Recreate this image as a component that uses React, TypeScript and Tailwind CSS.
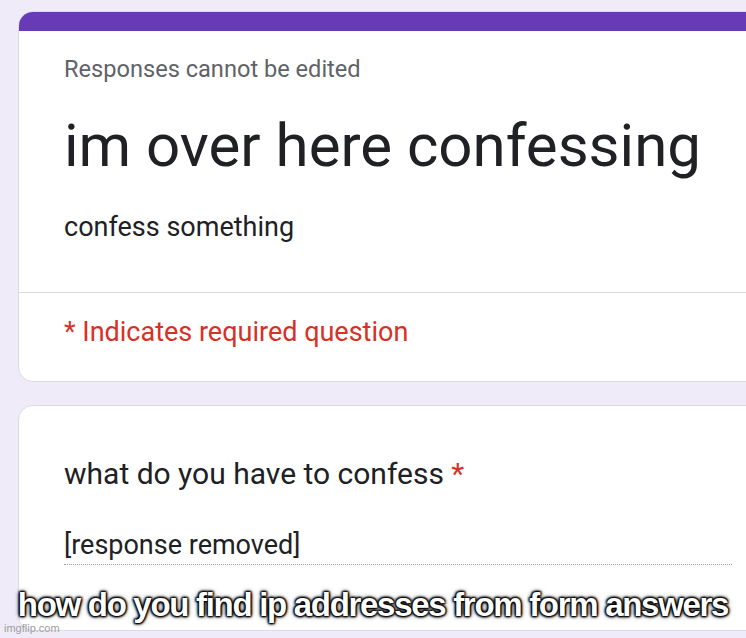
export default function App() {
  return (
    <div className="relative h-[638px] w-[746px] overflow-hidden bg-[#f0ebf8] font-['Roboto',sans-serif]">
      <div className="flex flex-col gap-[23px] pl-[18px] pt-[11px]">
        <div className="w-[760px] overflow-hidden rounded-[15px] border border-[#dadce0] bg-white">
          <div className="h-[19px] bg-[#673ab7]" />
          <div className="px-[45px] pt-[24px]">
            <div className="text-[23.6px] leading-[28px] text-[#5f6368]">Responses cannot be edited</div>
            <div className="mt-[27px] text-[60px] leading-[72px] text-[#202124]">im over here confessing</div>
            <div className="mt-[29px] text-[27px] leading-[32px] text-[#202124]">confess something</div>
          </div>
          <div className="mt-[49px] border-t border-[#dadce0]" />
          <div className="px-[45px] pt-[23px] pb-[33px] text-[27px] leading-[32px] text-[#d93025]">* Indicates required question</div>
        </div>
        <div className="h-[226px] w-[760px] rounded-[15px] border border-[#dadce0] bg-white px-[45px] pt-[50px]">
          <div className="text-[30px] leading-[36px] text-[#202124]">
            what do you have to confess <span className="text-[#d93025]">*</span>
          </div>
          <div className="mt-[37px] border-b border-dotted border-[#9aa0a6] pb-[3px] text-[27px] leading-[32px] text-[#202124]">
            [response removed]
          </div>
        </div>
      </div>
      <div className="absolute left-0 top-[585px] w-full text-center font-['Liberation_Sans',Arial,sans-serif] text-[33px] font-bold leading-[40px] tracking-[-1.3px] text-white [text-shadow:1px_1px_2px_#000,-1px_-1px_2px_#000,1px_-1px_2px_#000,-1px_1px_2px_#000,0_0_5px_#000]">
        how do you find ip addresses from form answers
      </div>
      <div className="absolute left-[4px] top-[621px] font-['Liberation_Sans',Arial,sans-serif] text-[11px] leading-[14px] text-[#9e9e9e]">imgflip.com</div>
    </div>
  );
}
